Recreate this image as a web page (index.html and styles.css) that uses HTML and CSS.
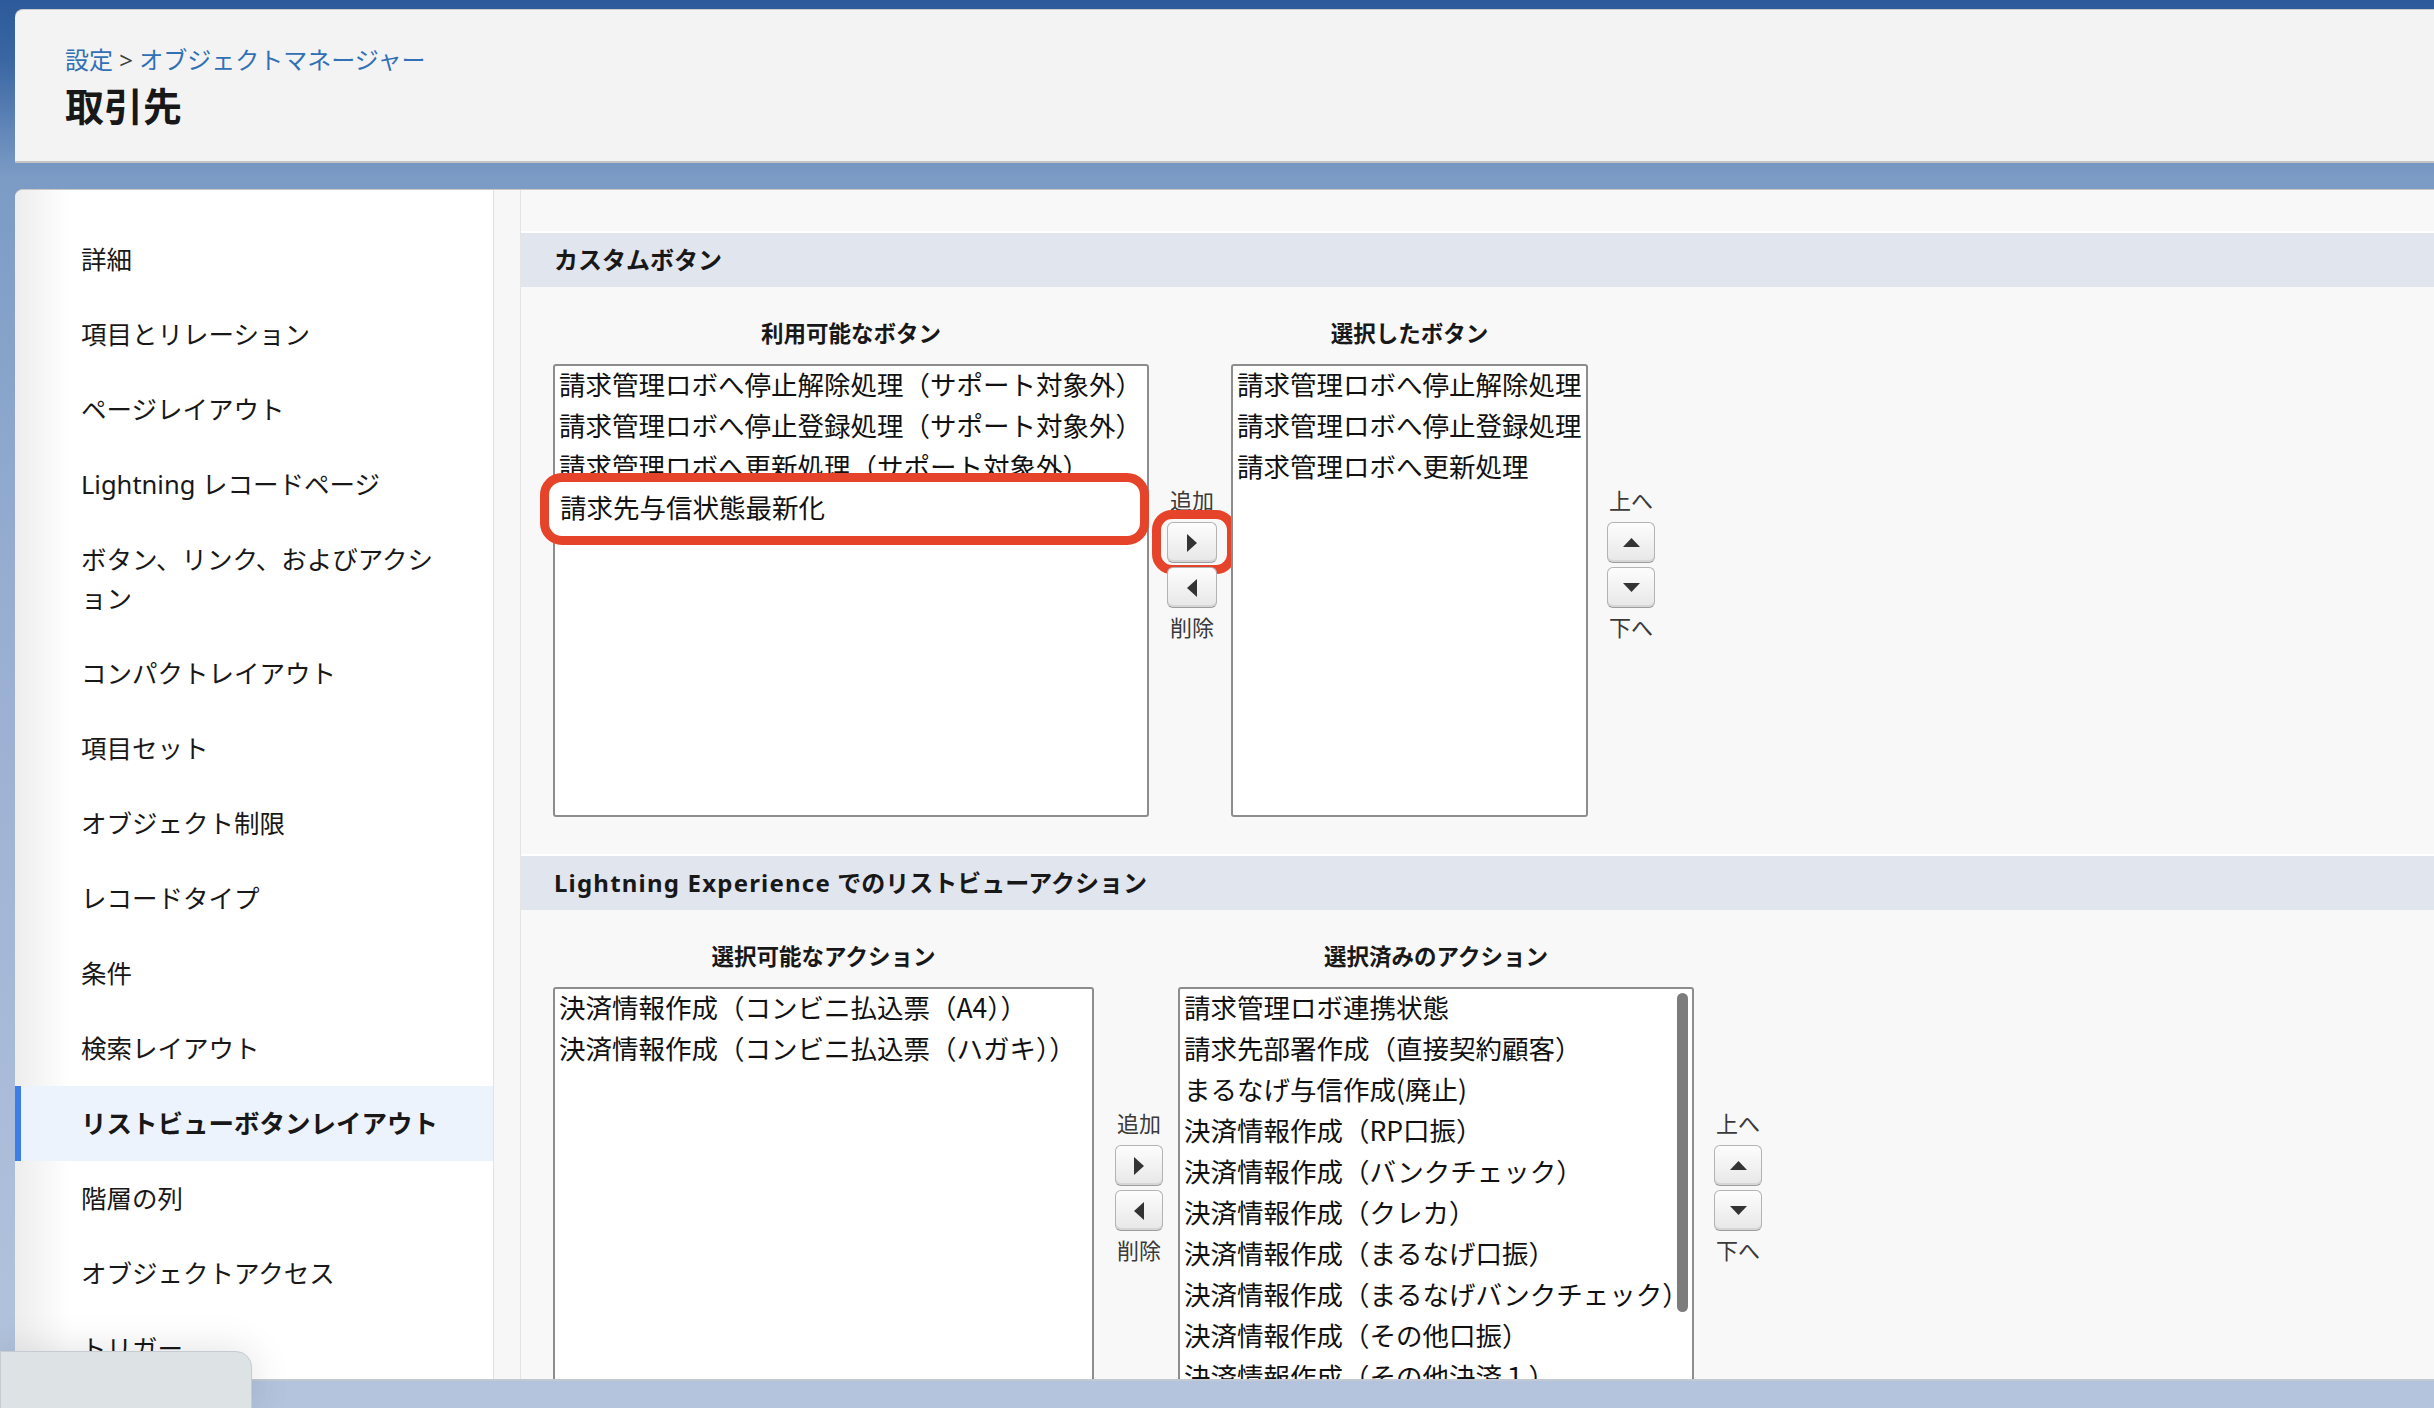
FILE: index.html
```html
<!DOCTYPE html>
<html lang="ja">
<head>
    <meta charset="UTF-8">
    <meta name="viewport" content="width=device-width, initial-scale=1.0">
    <title>取引先 | オブジェクトマネージャー</title>
    <link rel="stylesheet" href="styles.css">
</head>
<body>

    <header class="page-header">
        <div class="breadcrumb"><a href="#">設定</a> &gt; <a href="#">オブジェクトマネージャー</a></div>
        <h1 class="page-title">取引先</h1>
    </header>

    <div class="main">
        <nav class="sidebar">
            <a class="side-link" href="#">詳細</a>
            <a class="side-link" href="#">項目とリレーション</a>
            <a class="side-link" href="#">ページレイアウト</a>
            <a class="side-link" href="#">Lightning レコードページ</a>
            <a class="side-link" href="#">ボタン、リンク、およびアクション</a>
            <a class="side-link" href="#">コンパクトレイアウト</a>
            <a class="side-link" href="#">項目セット</a>
            <a class="side-link" href="#">オブジェクト制限</a>
            <a class="side-link" href="#">レコードタイプ</a>
            <a class="side-link" href="#">条件</a>
            <a class="side-link" href="#">検索レイアウト</a>
            <a class="side-link active" href="#">リストビューボタンレイアウト</a>
            <a class="side-link" href="#">階層の列</a>
            <a class="side-link" href="#">オブジェクトアクセス</a>
            <a class="side-link" href="#">トリガー</a>
        </nav>
        <div class="gutter"></div>

        <div class="content">
            <section class="panel">
                <h2 class="panel-title">カスタムボタン</h2>
                <div class="picker picker-buttons">
                    <div class="pick-col col-avail">
                        <div class="pick-head">利用可能なボタン</div>
                        <div class="listbox">
                            <div class="opt">請求管理ロボへ停止解除処理（サポート対象外）</div>
                            <div class="opt">請求管理ロボへ停止登録処理（サポート対象外）</div>
                            <div class="opt">請求管理ロボへ更新処理（サポート対象外）</div>
                            <div class="opt marked">請求先与信状態最新化</div>
                        </div>
                    </div>
                    <div class="mover">
                        <span class="mv-label">追加</span>
                        <button class="arrow-btn marked-btn" title="追加">
                            <svg width="10" height="18" viewBox="0 0 10 18"><polygon points="0,0 10,9 0,18" fill="#333"/></svg>
                        </button>
                        <button class="arrow-btn second" title="削除">
                            <svg width="10" height="18" viewBox="0 0 10 18"><polygon points="10,0 0,9 10,18" fill="#333"/></svg>
                        </button>
                        <span class="mv-label below">削除</span>
                    </div>
                    <div class="pick-col col-chosen">
                        <div class="pick-head">選択したボタン</div>
                        <div class="listbox">
                            <div class="opt">請求管理ロボへ停止解除処理</div>
                            <div class="opt">請求管理ロボへ停止登録処理</div>
                            <div class="opt">請求管理ロボへ更新処理</div>
                        </div>
                    </div>
                    <div class="mover sorter">
                        <span class="mv-label">上へ</span>
                        <button class="arrow-btn small" title="上へ">
                            <svg width="17" height="9" viewBox="0 0 17 9"><polygon points="0,9 8.5,0 17,9" fill="#333"/></svg>
                        </button>
                        <button class="arrow-btn small second" title="下へ">
                            <svg width="17" height="9" viewBox="0 0 17 9"><polygon points="0,0 17,0 8.5,9" fill="#333"/></svg>
                        </button>
                        <span class="mv-label below">下へ</span>
                    </div>
                </div>
            </section>

            <section class="panel">
                <h2 class="panel-title"><span class="latin">Lightning Experience</span> でのリストビューアクション</h2>
                <div class="picker picker-actions">
                    <div class="pick-col col-avail">
                        <div class="pick-head">選択可能なアクション</div>
                        <div class="listbox tall">
                            <div class="opt">決済情報作成（コンビニ払込票（A4））</div>
                            <div class="opt">決済情報作成（コンビニ払込票（ハガキ））</div>
                        </div>
                    </div>
                    <div class="mover">
                        <span class="mv-label">追加</span>
                        <button class="arrow-btn small" title="追加">
                            <svg width="10" height="18" viewBox="0 0 10 18"><polygon points="0,0 10,9 0,18" fill="#333"/></svg>
                        </button>
                        <button class="arrow-btn small second" title="削除">
                            <svg width="10" height="18" viewBox="0 0 10 18"><polygon points="10,0 0,9 10,18" fill="#333"/></svg>
                        </button>
                        <span class="mv-label below">削除</span>
                    </div>
                    <div class="pick-col col-chosen">
                        <div class="pick-head">選択済みのアクション</div>
                        <div class="listbox tall scroll">
                            <div class="opt">請求管理ロボ連携状態</div>
                            <div class="opt">請求先部署作成（直接契約顧客）</div>
                            <div class="opt">まるなげ与信作成(廃止)</div>
                            <div class="opt">決済情報作成（RP口振）</div>
                            <div class="opt">決済情報作成（バンクチェック）</div>
                            <div class="opt">決済情報作成（クレカ）</div>
                            <div class="opt">決済情報作成（まるなげ口振）</div>
                            <div class="opt">決済情報作成（まるなげバンクチェック）</div>
                            <div class="opt">決済情報作成（その他口振）</div>
                            <div class="opt">決済情報作成（その他決済１）</div>
                            <div class="opt">決済情報作成（その他決済２）</div>
                            <span class="thumb"></span>
                        </div>
                    </div>
                    <div class="mover sorter">
                        <span class="mv-label">上へ</span>
                        <button class="arrow-btn small" title="上へ">
                            <svg width="17" height="9" viewBox="0 0 17 9"><polygon points="0,9 8.5,0 17,9" fill="#333"/></svg>
                        </button>
                        <button class="arrow-btn small second" title="下へ">
                            <svg width="17" height="9" viewBox="0 0 17 9"><polygon points="0,0 17,0 8.5,9" fill="#333"/></svg>
                        </button>
                        <span class="mv-label below">下へ</span>
                    </div>
                </div>
            </section>
        </div>
    </div>

    <div class="dock"></div>

</body>
</html>
```

FILE: styles.css
```css
* {
    box-sizing: border-box;
}
html, body {
    height: 1408px;
}
body {
    margin: 0;
    overflow: hidden;
    font-family: "Noto Sans", "Noto Sans CJK JP", sans-serif;
    color: #181818;
    background: linear-gradient(#2c5a9a 0, #3a66a3 60px, #7b9bc5 175px, #98aed1 600px, #b4c4dd 1408px);
}
.page-header {
    margin: 9px 0 0 15px;
    height: 154px;
    padding: 33px 0 0 50px;
    background-color: #f3f3f3;
    border-top: 1px solid #cdcdcd;
    border-bottom: 2px solid #c4c4c4;
    border-radius: 8px 0 0 0;
}
.breadcrumb {
    font-size: 24px;
    line-height: 34px;
    color: #3e3e3e;
}
.breadcrumb a {
    color: #3170b5;
    text-decoration: none;
}
.page-title {
    margin: 4px 0 0;
    font-size: 39px;
    line-height: 50px;
    font-weight: bold;
    color: #181818;
}
.main {
    display: flex;
    margin: 26px 0 0 15px;
    height: 1192px;
    overflow: hidden;
    background-color: #f8f8f8;
    border-top: 1px solid #c8c8c8;
    border-bottom: 2px solid #c2c9d3;
    border-radius: 8px 0 0 0;
}
.sidebar {
    flex-shrink: 0;
    width: 479px;
    padding-top: 32px;
    background: linear-gradient(to right, #ededed, #fff 55px);
    border-right: 1px solid #e2e2e2;
}
.side-link {
    position: relative;
    display: block;
    padding: 18px 43px 18px 66px;
    font-size: 25.5px;
    line-height: 39px;
    color: #181818;
    text-decoration: none;
    line-break: loose;
}
.side-link.active {
    background-color: #edf3fd;
    font-weight: bold;
}
.side-link.active::before {
    content: "";
    position: absolute;
    left: 0;
    top: 0;
    bottom: 0;
    width: 6px;
    background-color: #3d7de6;
}
.gutter {
    flex-shrink: 0;
    width: 27px;
    background-color: #f7f7f7;
    border-right: 1px solid #e4e4e4;
}
.content {
    flex: 1;
    padding-top: 43px;
}
.panel-title {
    margin: 0;
    height: 54px;
    padding-left: 33px;
    background-color: #e1e5ee;
    box-shadow: 0 -2px 0 #fff;
    font-size: 24px;
    line-height: 54px;
    font-weight: bold;
    color: #181818;
}
.panel-title .latin {
    letter-spacing: 1.2px;
}
.picker {
    display: flex;
    padding-left: 32px;
    margin-bottom: 39px;
}
.pick-head {
    margin: 32px 0 15px;
    text-align: center;
    font-size: 22.5px;
    line-height: 30px;
    font-weight: bold;
    color: #181818;
}
.listbox {
    position: relative;
    height: 453px;
    padding: 0 4px;
    background-color: #fff;
    border: 2px solid #8d8d8d;
    border-radius: 3px;
    font-family: "Noto Sans CJK JP", sans-serif;
    font-size: 26.5px;
    line-height: 41px;
    color: #111;
    white-space: nowrap;
}
.listbox .opt:first-child {
    margin-top: -3px;
}
.listbox.tall {
    height: 560px;
    overflow: hidden;
}
.opt.marked {
    position: relative;
    z-index: 1;
    padding-left: 1px;
}
.opt.marked::before {
    content: "";
    position: absolute;
    left: -19px;
    right: -6px;
    top: -13px;
    bottom: -18px;
    z-index: -1;
    background-color: #fff;
    border: 9px solid #e6432b;
    border-radius: 22px;
}
.thumb {
    position: absolute;
    top: 4px;
    right: 4px;
    width: 11px;
    height: 319px;
    border-radius: 6px;
    background-color: #7c7c7c;
}
.picker-buttons .col-avail { width: 596px; }
.picker-buttons .col-chosen { width: 357px; }
.picker-actions .col-avail { width: 541px; }
.picker-actions .col-chosen { width: 516px; }
.mover {
    display: flex;
    flex-direction: column;
    align-items: center;
    padding-top: 199px;
}
.picker-buttons .mover { width: 82px; padding-left: 4px; }
.picker-actions .mover { width: 84px; padding-left: 6px; }
.picker .sorter {
    width: auto;
    padding-left: 19px;
}
.picker-actions .sorter { padding-left: 20px; }
.mv-label {
    font-family: "Noto Sans CJK JP", sans-serif;
    font-size: 22px;
    line-height: 26px;
    color: #3a3a3a;
}
.mv-label.below {
    margin-top: 5px;
}
.arrow-btn {
    position: relative;
    display: flex;
    align-items: center;
    justify-content: center;
    width: 50px;
    height: 41px;
    margin-top: 10px;
    padding: 0;
    background: linear-gradient(#fdfdfd, #e7e7e7);
    border: 1px solid #b3b3b3;
    border-bottom-color: #9d9d9d;
    border-radius: 6px;
    box-shadow: inset 0 -2px 0 #d6d6d6;
    cursor: pointer;
}
.arrow-btn.small { width: 48px; }
.arrow-btn.second { margin-top: 4px; }
.marked-btn::after {
    content: "";
    position: absolute;
    left: -16px;
    right: -20px;
    top: -13px;
    bottom: -12px;
    border: 9px solid #e6432b;
    border-radius: 20px;
}
.dock {
    position: absolute;
    left: 0;
    top: 1351px;
    width: 252px;
    height: 60px;
    background-color: #dde2e5;
    border: 1px solid #c5cbd0;
    border-radius: 0 16px 0 0;
    box-shadow: 0 0 40px rgba(0, 0, 0, 0.12);
}
```
